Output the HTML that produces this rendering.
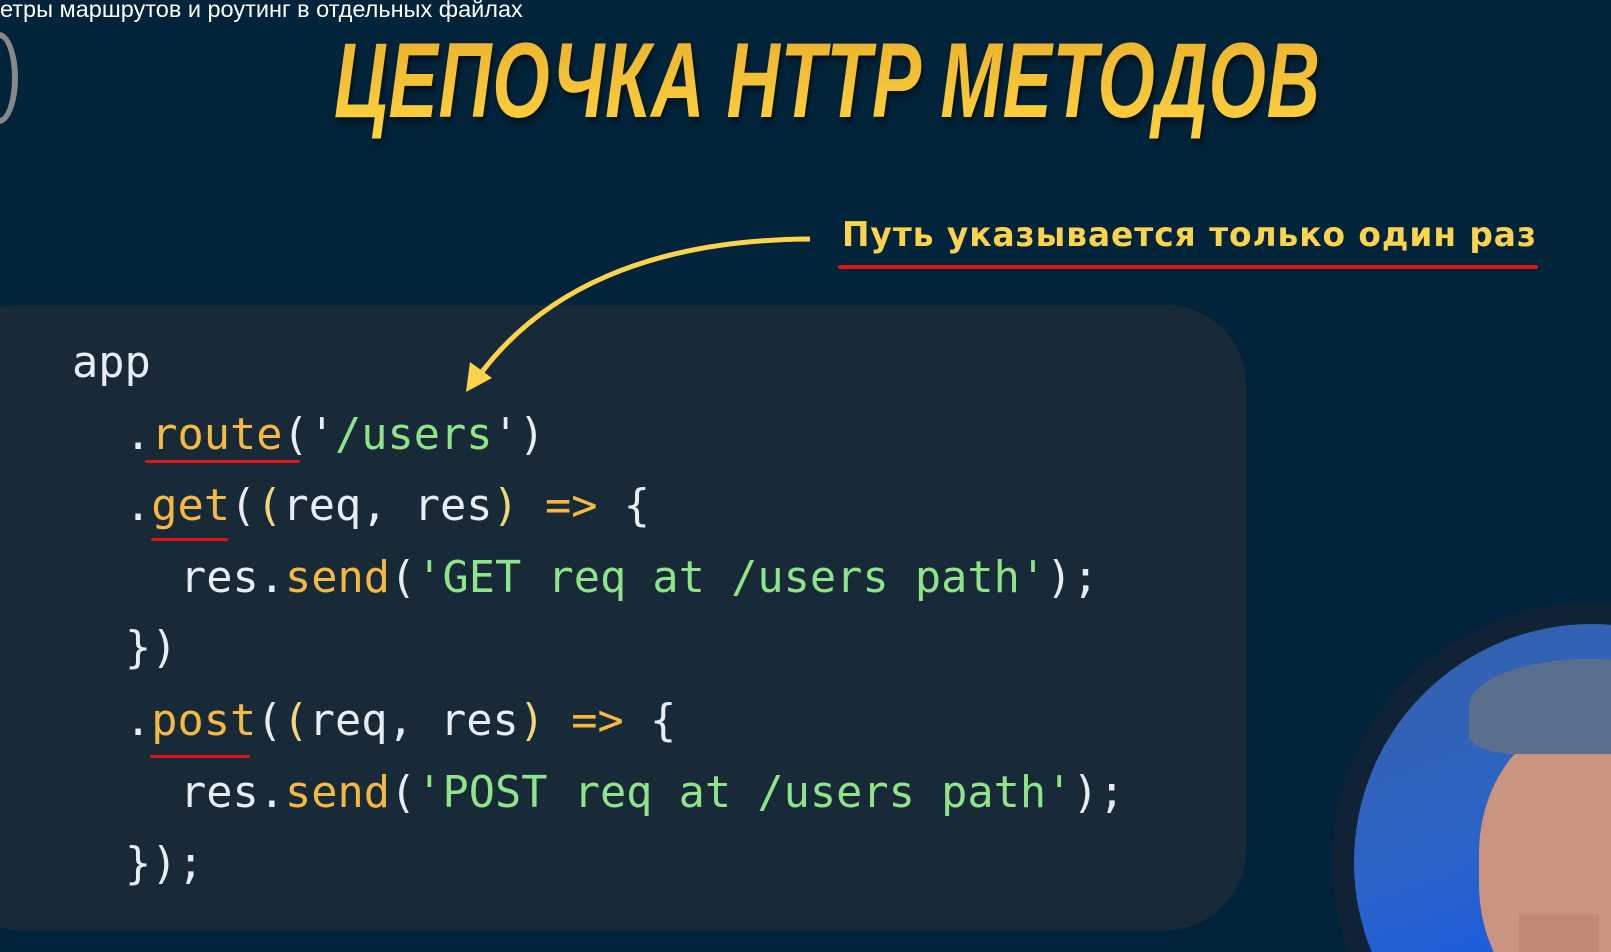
<!DOCTYPE html>
<html><head><meta charset="utf-8"><style>
html,body{margin:0;padding:0;overflow:hidden;width:1611px;height:952px}
body{background:#02243a;position:relative;font-family:"Liberation Sans",sans-serif}
.sub{position:absolute;left:0;top:-4px;color:#fff;font-size:23.5px;white-space:nowrap}
.title{position:absolute;left:334px;top:18px;font-weight:bold;font-style:italic;font-size:107px;white-space:nowrap;transform:scaleX(0.69);transform-origin:0 0;letter-spacing:1px;background:linear-gradient(#e8ad2c,#ffd540);-webkit-background-clip:text;-webkit-text-fill-color:transparent;filter:drop-shadow(3px 5px 4px rgba(0,0,0,.5))}
.ann{position:absolute;left:842px;top:215px;font-weight:bold;font-size:34px;color:#fcd34d;white-space:nowrap;font-family:"DejaVu Sans",sans-serif;transform:scaleX(0.965);transform-origin:0 0;letter-spacing:1px}
.ul{position:absolute;background:#e01616;height:4px;border-radius:2px}
.panel{position:absolute;left:-60px;top:305px;width:1306px;height:625px;background:#182a38;border-radius:80px}
.code{position:absolute;font-family:"DejaVu Sans Mono",monospace;font-size:43.6px;line-height:72px;color:#e6edf3;white-space:pre}
.y{color:#f5b942}.g{color:#8fe388}.p{color:#f0d77a}
.camwrap{position:absolute;left:0;top:0;width:1611px;height:952px;overflow:hidden}
.cam{position:absolute;left:1332px;top:602px;width:520px;height:520px;border-radius:50%;background:#0f2236}
.cam2{position:absolute;left:1354px;top:624px;width:476px;height:476px;border-radius:50%;background:linear-gradient(160deg,#3560a8 0%,#2c64c8 40%,#0a55f0 80%);overflow:hidden}
</style></head><body>
<div class="sub">етры маршрутов и роутинг в отдельных файлах</div>
<div style="position:absolute;left:-20px;top:32px;width:26px;height:80px;border:6px solid #888;border-radius:50%"></div>
<div class="title">ЦЕПОЧКА HTTP МЕТОДОВ</div>
<div class="ann">Путь указывается только один раз</div>
<div class="ul" style="left:838px;top:265px;width:700px;height:4px"></div>
<div class="panel"></div>
<svg style="position:absolute;left:0;top:0" width="1611" height="952">
<path d="M810 239 C 650 240, 540 290, 476 380" stroke="#fcd34d" stroke-width="5" fill="none"/>
<path d="M466 392 L470 362 L492 378 Z" fill="#fcd34d"/>
</svg>
<div class="code" style="left:72px;top:327px">app</div>
<div class="code" style="left:125px;top:399px">.<span class="y">route</span>('<span class="g">/users</span>')</div>
<div class="code" style="left:125px;top:470px">.<span class="y">get</span>(<span class="p">(</span>req, res<span class="p">)</span> <span class="y">=&gt;</span> {</div>
<div class="code" style="left:180px;top:542px">res.<span class="y">send</span>(<span class="g">'GET req at /users path'</span>);</div>
<div class="code" style="left:125px;top:612px">})</div>
<div class="code" style="left:125px;top:685px">.<span class="y">post</span>(<span class="p">(</span>req, res<span class="p">)</span> <span class="y">=&gt;</span> {</div>
<div class="code" style="left:180px;top:757px">res.<span class="y">send</span>(<span class="g">'POST req at /users path'</span>);</div>
<div class="code" style="left:125px;top:828px">});</div>
<div class="ul" style="left:145px;top:460px;width:155px;height:3px"></div>
<div class="ul" style="left:151px;top:538px;width:77px;height:3px"></div>
<div class="ul" style="left:150px;top:755px;width:100px;height:3px"></div>
<div class="camwrap">
<div class="cam"></div>
<div class="cam2">
<div style="position:absolute;left:125px;top:95px;width:240px;height:300px;border-radius:45%;background:#c99580"></div>
<div style="position:absolute;left:115px;top:35px;width:240px;height:95px;border-radius:50% 50% 20% 20%;background:#5a6f8e"></div>
<div style="position:absolute;left:70px;top:345px;width:380px;height:200px;border-radius:40%;background:#3d4a5e"></div>
<div style="position:absolute;left:165px;top:290px;width:80px;height:70px;background:#c08a75;border-radius:0 0 40% 40%"></div>
</div>
</div>
</body></html>
